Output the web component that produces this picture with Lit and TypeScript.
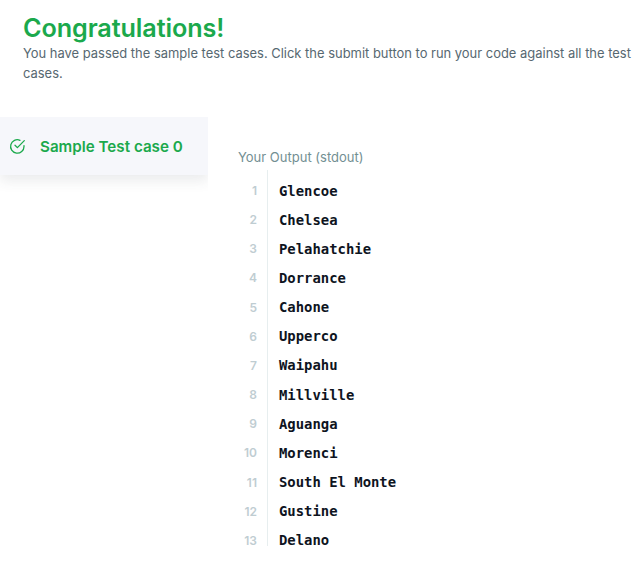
import { LitElement, html, css } from "lit";
import { customElement } from "lit/decorators.js";

const LINES = ["Glencoe","Chelsea","Pelahatchie","Dorrance","Cahone","Upperco","Waipahu","Millville","Aguanga","Morenci","South El Monte","Gustine","Delano"];

@customElement("app-root")
export class AppRoot extends LitElement {
  static styles = css`
    :host { display: block; width: 636px; height: 567px; overflow: hidden; background: #fff; font-family: Inter, "Noto Sans", sans-serif; }
    .head { padding: 13px 0 0 23px; }
    h1 { margin: 0; font-size: 25.2px; line-height: 30px; font-weight: 600; color: #1ba94c; letter-spacing: -0.1px; }
    .msg { margin: 0; width: 612px; font-size: 12.95px; line-height: 20px; color: #576871; }
    .body { display: flex; align-items: flex-start; margin-top: 34px; }
    .tab { width: 208px; height: 58px; box-sizing: border-box; display: flex; align-items: center; padding-left: 9px; gap: 14px; background: #f6f7fb; box-shadow: 0 6px 12px rgba(57,66,74,.1); clip-path: inset(0 0 -24px 0); font-size: 15.2px; font-weight: 600; color: #1ba94c; }
    .tab svg { display: block; }
    .out { margin-left: 30px; padding-top: 31px; }
    .label { font-size: 13px; line-height: 18px; color: #738f93; }
    .lines { margin-top: 4px; }
    .row { display: flex; height: 29.17px; }
    .row:last-child { height: 26px; }
    .num { width: 29px; flex: none; box-sizing: border-box; padding: 11px 10px 0 0; text-align: right; font-size: 12px; line-height: 20px; font-weight: 600; color: #bfcdd2; }
    .code { border-left: 1px solid #e7eeef; padding: 10.5px 0 0 11px; line-height: 20px; font-family: "DejaVu Sans Mono", monospace; font-weight: 700; font-size: 13.9px; color: #0e141e; white-space: pre; }
  `;
  render() {
    return html`
      <div class="head">
        <h1>Congratulations!</h1>
        <p class="msg">You have passed the sample test cases. Click the submit button to run your code against all the test cases.</p>
      </div>
      <div class="body">
        <div class="tab">
          <svg width="17" height="17" viewBox="0 0 17 17" fill="none" stroke="#1ba94c" stroke-width="1.3" stroke-linecap="round" stroke-linejoin="round">
            <path d="M15 7.6v.8a6.7 6.7 0 1 1-4-6.1"/>
            <path d="M15.3 2.6 8.4 9.6 6 7.2"/>
          </svg>
          <span>Sample Test case 0</span>
        </div>
        <div class="out">
          <div class="label">Your Output (stdout)</div>
          <div class="lines">
            ${LINES.map((l, i) => html`<div class="row"><div class="num">${i + 1}</div><div class="code">${l}</div></div>`)}
          </div>
        </div>
      </div>
    `;
  }
}
